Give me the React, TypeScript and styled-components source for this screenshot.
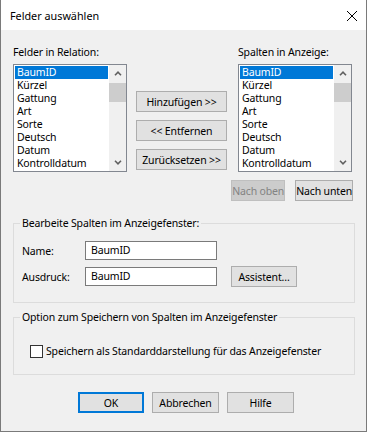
import styled, { createGlobalStyle } from "styled-components";

const GlobalStyle = createGlobalStyle`
  html, body {
    margin: 0;
    padding: 0;
    background: #ffffff;
  }
  body {
    font-family: "Noto Sans", "Open Sans", sans-serif;
    font-size: 10.5px;
    letter-spacing: -0.15px;
    color: #000;
  }
  * {
    box-sizing: border-box;
  }
`;

const fields = [
  "BaumID",
  "Kürzel",
  "Gattung",
  "Art",
  "Sorte",
  "Deutsch",
  "Datum",
  "Kontrolldatum",
];

const Chevron = ({ down }: { down?: boolean }) => (
  <svg width="8" height="5" viewBox="0 0 8 5">
    <path
      d={down ? "M1 0.8 L4 3.8 L7 0.8" : "M1 4.2 L4 1.2 L7 4.2"}
      fill="none"
      stroke="#606060"
      strokeWidth="1.6"
    />
  </svg>
);

const FieldList = () => (
  <ListBox>
    <Items>
      {fields.map((f, i) => (
        <Item key={f} $selected={i === 0}>
          {f}
        </Item>
      ))}
    </Items>
    <ScrollBar>
      <ArrowBox>
        <Chevron />
      </ArrowBox>
      <Thumb />
      <Track />
      <ArrowBox>
        <Chevron down />
      </ArrowBox>
    </ScrollBar>
  </ListBox>
);

export default function App() {
  return (
    <>
      <GlobalStyle />
      <Window>
        <TitleBar>
          <Title>Felder auswählen</Title>
          <svg width="10" height="10" viewBox="0 0 10 10">
            <path d="M0 0 L10 10 M10 0 L0 10" stroke="#000" strokeWidth="1" />
          </svg>
        </TitleBar>
        <Client>
          <TopArea>
            <Column>
              <Label>Felder in Relation:</Label>
              <FieldList />
            </Column>
            <MiddleColumn>
              <Button $width={91}>Hinzufügen &gt;&gt;</Button>
              <Button $width={91}>&lt;&lt; Entfernen</Button>
              <Button $width={91}>Zurücksetzen &gt;&gt;</Button>
            </MiddleColumn>
            <Column>
              <Label>Spalten in Anzeige:</Label>
              <FieldList />
              <OrderRow>
                <Button $width={66} disabled>
                  Nach oben
                </Button>
                <Button $width={66}>Nach unten</Button>
              </OrderRow>
            </Column>
          </TopArea>

          <Group>
            <Legend>Bearbeite Spalten im Anzeigefenster:</Legend>
            <FormGrid>
              <span>Name:</span>
              <TextInput>BaumID</TextInput>
              <span />
              <span>Ausdruck:</span>
              <TextInput>BaumID</TextInput>
              <Button $width={66}>Assistent...</Button>
            </FormGrid>
          </Group>

          <Group $gapTop={6}>
            <Legend>Option zum Speichern von Spalten im Anzeigefenster</Legend>
            <CheckRow>
              <CheckBox />
              <span>Speichern als Standarddarstellung für das Anzeigefenster</span>
            </CheckRow>
          </Group>

          <DialogButtons>
            <Button $width={66} $default>
              OK
            </Button>
            <Button $width={67}>Abbrechen</Button>
            <Button $width={67}>Hilfe</Button>
          </DialogButtons>
        </Client>
      </Window>
    </>
  );
}

const Window = styled.div`
  width: 367px;
  height: 432px;
  display: flex;
  flex-direction: column;
  border: 1px solid #7a7a7a;
  border-top: none;
  background: #f0f0f0;
`;

const TitleBar = styled.div`
  height: 30px;
  background: #ffffff;
  display: flex;
  align-items: center;
  justify-content: space-between;
  padding: 1px 9px 0 9px;
`;

const Title = styled.span`
  font-size: 10.8px;
  letter-spacing: 0;
`;

const Client = styled.div`
  flex: 1;
  padding: 14px 11px 0 12px;
  display: flex;
  flex-direction: column;
`;

const TopArea = styled.div`
  display: flex;
  align-items: flex-start;
`;

const Column = styled.div`
  width: 114px;
  display: flex;
  flex-direction: column;
`;

const MiddleColumn = styled.div`
  display: flex;
  flex-direction: column;
  gap: 8px;
  padding-top: 47px;
  margin: 0 11px 0 9px;
`;

const Label = styled.div`
  height: 16px;
  line-height: 16px;
  margin-bottom: 4px;
  white-space: nowrap;
`;

const ListBox = styled.div`
  width: 114px;
  height: 108px;
  border: 1px solid #828790;
  background: #ffffff;
  display: flex;
`;

const Items = styled.div`
  flex: 1;
  padding: 1px;
  overflow: hidden;
`;

const Item = styled.div<{ $selected?: boolean }>`
  height: 13px;
  line-height: 13px;
  padding-left: 2px;
  white-space: nowrap;
  background: ${(p) => (p.$selected ? "#0078d7" : "transparent")};
  color: ${(p) => (p.$selected ? "#ffffff" : "#000000")};
`;

const ScrollBar = styled.div`
  width: 17px;
  background: #f0f0f0;
  display: flex;
  flex-direction: column;
`;

const ArrowBox = styled.div`
  height: 17px;
  display: flex;
  align-items: center;
  justify-content: center;
`;

const Thumb = styled.div`
  height: 19px;
  margin-top: 1px;
  background: #cdcdcd;
`;

const Track = styled.div`
  flex: 1;
`;

const Button = styled.button<{ $width: number; $default?: boolean }>`
  width: ${(p) => p.$width}px;
  height: 21px;
  padding: 0;
  font-family: inherit;
  font-size: 10.5px;
  letter-spacing: inherit;
  color: #000;
  background: #e1e1e1;
  border: ${(p) => (p.$default ? "2px solid #0078d7" : "1px solid #adadad")};
  white-space: nowrap;

  &:disabled {
    background: #cccccc;
    border-color: #bfbfbf;
    color: #838383;
  }
`;

const OrderRow = styled.div`
  display: flex;
  justify-content: flex-end;
  gap: 10px;
  margin-top: 8px;
  margin-right: -1px;
`;

const Group = styled.fieldset<{ $gapTop?: number }>`
  margin: ${(p) => p.$gapTop ?? 14}px 0 0 0;
  padding: 0 0 15px 8px;
  border: 1px solid #dcdcdc;
  min-width: 0;
`;

const Legend = styled.legend`
  height: 16px;
  line-height: 16px;
  padding: 0 2px;
  margin-left: -2px;
`;

const FormGrid = styled.div`
  margin-top: 10px;
  display: grid;
  grid-template-columns: 63px 132px auto;
  row-gap: 6px;
  column-gap: 7px;
  align-items: center;
  justify-items: start;

  & > span:nth-child(3n + 1) {
    margin-right: -7px;
  }
`;

const TextInput = styled.div`
  width: 132px;
  height: 19px;
  line-height: 17px;
  padding-left: 5px;
  border: 1px solid #7a7a7a;
  background: #ffffff;
  margin-left: -7px;
`;

const CheckRow = styled.div`
  margin: 18px 0 0 8px;
  height: 16px;
  display: flex;
  align-items: center;
  gap: 3px;
`;

const CheckBox = styled.span`
  width: 13px;
  height: 13px;
  border: 1px solid #333333;
  background: #ffffff;
  flex: none;
`;

const DialogButtons = styled.div`
  display: flex;
  gap: 8px;
  margin: 17px 0 0 65px;
`;
